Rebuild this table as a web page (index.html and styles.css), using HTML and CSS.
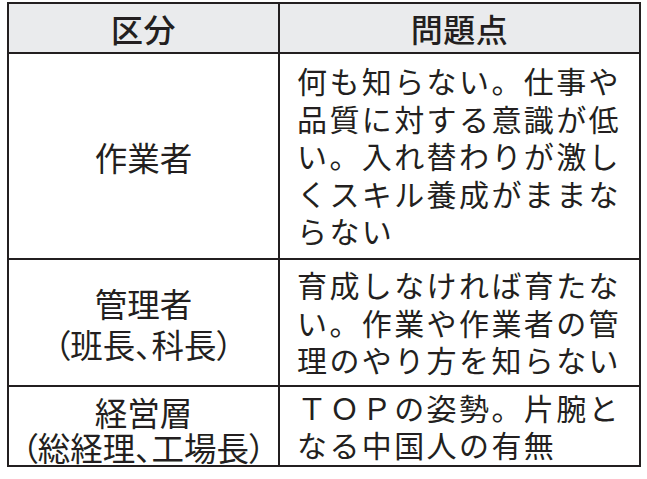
FILE: index.html
```html
<!DOCTYPE html>
<html lang="ja">
<head>
<meta charset="utf-8">
<link rel="stylesheet" href="styles.css">
</head>
<body>
<div class="table">
  <div class="cell head">区分</div>
  <div class="cell head">問題点</div>

  <div class="cell cat">作業者</div>
  <div class="cell desc">何も知らない。仕事や<br>品質に対する意識が低<br>い。入れ替わりが激し<br>くスキル養成がままな<br>らない</div>

  <div class="cell cat"><span class="lines">管理者<br><span class="nw">（班長、科長）</span></span></div>
  <div class="cell desc">育成しなければ育たな<br>い。作業や作業者の管<br>理のやり方を知らない</div>

  <div class="cell cat cat3"><span class="lines">経営層<br><span class="nw">（総経理、工場長）</span></span></div>
  <div class="cell desc">ＴＯＰの姿勢。片腕と<br>なる中国人の有無</div>
</div>
</body>
</html>
```

FILE: styles.css
```css
html, body {
  background: #ffffff;
}
body {
  margin: 2px 0 0 7px;
  font-family: "Noto Sans CJK JP", "Noto Sans CJK SC", sans-serif;
  color: #231f20;
}
.table {
  display: grid;
  grid-template-columns: 269px 359px;
  grid-template-rows: 48px 204px 125px 78px;
  gap: 2px;
  padding: 2px;
  width: 634px;
  box-sizing: border-box;
  background: #231f20;
}
.cell {
  background: #ffffff;
  display: flex;
  align-items: center;
}
.head {
  background: #eaebed;
  justify-content: center;
  font-size: 32px;
  font-weight: 500;
  line-height: 40px;
  letter-spacing: 0.5px;
}
.cat {
  justify-content: center;
  text-align: center;
  font-size: 32.5px;
  line-height: 41px;
}
.lines {
  display: block;
}
.nw {
  white-space: nowrap;
  font-feature-settings: "palt";
}
.cat3 {
  line-height: 35px;
  padding-top: 5px;
}
.desc {
  padding-left: 17px;
  font-size: 30px;
  line-height: 37.5px;
  letter-spacing: 2.4px;
}
```
